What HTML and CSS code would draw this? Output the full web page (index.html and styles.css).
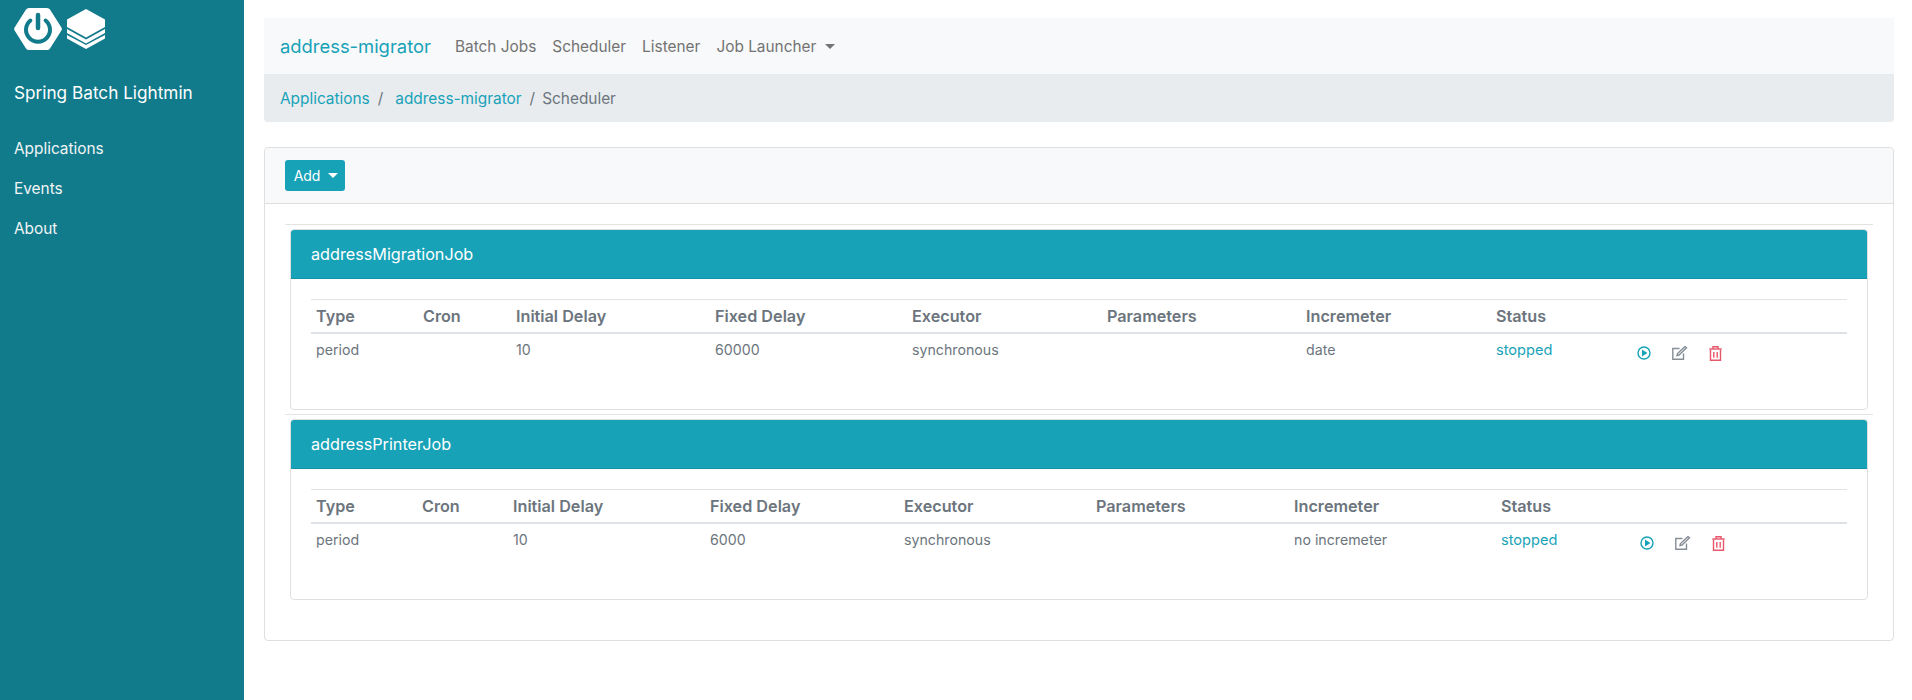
FILE: index.html
```html
<!DOCTYPE html>
<html lang="en">
<head>
  <meta charset="UTF-8">
  <title>Spring Batch Lightmin</title>
  <link rel="stylesheet" href="styles.css">
</head>
<body>
  <div class="layout">
    <aside class="sidebar">
      <div class="logos">
        <svg class="logo-spring" viewBox="0 0 48 42">
          <path d="M12 1.5 Q13 0 15 0 H33 Q35 0 36 1.5 L47.4 19.5 Q48.4 21 47.4 22.500 L36 40.500 Q35 42 33 42 H15 Q13 42 12 40.500 L.6 22.5 Q-.4 21 .6 19.5 Z" fill="#fff"/>
          <path d="M16.400 12.500 A12 12 0 1 0 31.600 12.500" fill="none" stroke="#117a8b" stroke-width="4" stroke-linecap="round"/>
          <path d="M24 7 V20" fill="none" stroke="#117a8b" stroke-width="4.500" stroke-linecap="round"/>
        </svg>
        <svg class="logo-stack" viewBox="0 0 38 40">
          <path d="M19 0 L38 10.500 V18 L19 28.500 L0 18 V10.500 Z" fill="#fff"/>
          <path d="M0 20 L19 30.500 L38 20 V24 L19 34.500 L0 24 Z" fill="#fff"/>
          <path d="M0 26 L19 36 L38 26 V29.500 L19 40 L0 29.500 Z" fill="#fff"/>
        </svg>
      </div>
      <div class="app-title">Spring Batch Lightmin</div>
      <nav class="side-nav">
        <a href="#">Applications</a>
        <a href="#">Events</a>
        <a href="#">About</a>
      </nav>
    </aside>

    <main class="content">
      <div class="navbar">
        <a class="brand" href="#">address-migrator</a>
        <a class="nav-link" href="#">Batch Jobs</a>
        <a class="nav-link" href="#">Scheduler</a>
        <a class="nav-link" href="#">Listener</a>
        <a class="nav-link" href="#">Job Launcher <span class="caret"></span></a>
      </div>
      <div class="breadcrumb">
        <a href="#">Applications</a>
        <span class="sep">/</span>
        <a href="#">address-migrator</a>
        <span class="sep">/</span>
        <span>Scheduler</span>
      </div>

      <section class="card outer">
        <div class="card-header">
          <button class="btn-add">Add <span class="caret"></span></button>
        </div>
        <div class="card-body">
          <hr>
          <div class="card job">
            <div class="job-header">addressMigrationJob</div>
            <div class="job-body">
              <table class="jobs first">
                <colgroup>
                  <col class="c1"><col class="c2"><col class="c3"><col class="c4"><col class="c5"><col class="c6"><col class="c7"><col class="c8"><col>
                </colgroup>
                <thead>
                  <tr><th>Type</th><th>Cron</th><th>Initial Delay</th><th>Fixed Delay</th><th>Executor</th><th>Parameters</th><th>Incremeter</th><th>Status</th><th></th></tr>
                </thead>
                <tbody>
                  <tr>
                    <td>period</td><td></td><td>10</td><td>60000</td><td>synchronous</td><td></td><td>date</td><td><a class="status" href="#">stopped</a></td>
                    <td>
                      <div class="actions">
                        <svg class="icon play" viewBox="0 0 14 14"><circle cx="7" cy="7" r="6"/><path class="solid" d="M5 3.600 L10.400 7 L5 10.400 Z"/></svg>
                        <svg class="icon edit" viewBox="0 0 16 14"><path d="M11.500 7.500 V13.200 H.8 V2.500 H7.500"/><path d="M5.500 7.500 L5 9.500 L7 9 L14.500 1.800 L13 .5 Z"/></svg>
                        <svg class="icon trash" viewBox="0 0 13 15"><path d="M1.500 3.500 V14.200 H11.500 V3.500"/><path d="M.3 3 H12.700"/><path d="M4 3 V.8 H9 V3"/><path d="M4.800 6 V11.800 M8.200 6 V11.800"/></svg>
                      </div>
                    </td>
                  </tr>
                </tbody>
              </table>
            </div>
          </div>
          <hr>
          <div class="card job">
            <div class="job-header">addressPrinterJob</div>
            <div class="job-body">
              <table class="jobs second">
                <colgroup>
                  <col class="c1"><col class="c2"><col class="c3"><col class="c4"><col class="c5"><col class="c6"><col class="c7"><col class="c8"><col>
                </colgroup>
                <thead>
                  <tr><th>Type</th><th>Cron</th><th>Initial Delay</th><th>Fixed Delay</th><th>Executor</th><th>Parameters</th><th>Incremeter</th><th>Status</th><th></th></tr>
                </thead>
                <tbody>
                  <tr>
                    <td>period</td><td></td><td>10</td><td>6000</td><td>synchronous</td><td></td><td>no incremeter</td><td><a class="status" href="#">stopped</a></td>
                    <td>
                      <div class="actions">
                        <svg class="icon play" viewBox="0 0 14 14"><circle cx="7" cy="7" r="6"/><path class="solid" d="M5 3.600 L10.400 7 L5 10.400 Z"/></svg>
                        <svg class="icon edit" viewBox="0 0 16 14"><path d="M11.500 7.500 V13.200 H.8 V2.500 H7.500"/><path d="M5.500 7.500 L5 9.500 L7 9 L14.500 1.800 L13 .5 Z"/></svg>
                        <svg class="icon trash" viewBox="0 0 13 15"><path d="M1.500 3.500 V14.200 H11.500 V3.500"/><path d="M.3 3 H12.700"/><path d="M4 3 V.8 H9 V3"/><path d="M4.800 6 V11.800 M8.200 6 V11.800"/></svg>
                      </div>
                    </td>
                  </tr>
                </tbody>
              </table>
            </div>
          </div>
        </div>
      </section>
    </main>
  </div>
</body>
</html>
```

FILE: styles.css
```css
* {
  box-sizing: border-box;
}
body {
  margin: 0;
  font-family: Inter, "Liberation Sans", sans-serif;
  font-size: 16px;
  line-height: 1.5;
  color: #6c757d;
  background: #fff;
}
a {
  color: #17a2b8;
  text-decoration: none;
}
.layout {
  display: flex;
  min-height: 700px;
}

/* sidebar */
.sidebar {
  width: 244px;
  flex: none;
  background: #117a8b;
  color: #fff;
  padding: 8px 14px 0;
}
.logos {
  display: flex;
  align-items: center;
  gap: 5px;
  height: 42px;
}
.logo-spring {
  width: 48px;
  height: 42px;
}
.logo-stack {
  width: 38px;
  height: 40px;
}
.app-title {
  margin-top: 29px;
  font-size: 17.2px;
  line-height: 27px;
}
.side-nav {
  display: flex;
  flex-direction: column;
  margin-top: 23px;
  font-size: 15.400px;
}
.side-nav a {
  color: #f1f5f6;
  height: 40px;
  line-height: 40px;
}

/* top bars */
.content {
  flex: 1;
  min-width: 0;
  padding: 18px 18px 0 20px;
}
.navbar {
  display: flex;
  align-items: center;
  height: 56px;
  padding: 1px 16px 0;
  background: #f8f9fa;
  font-size: 15.400px;
}
.brand {
  font-size: 18.400px;
  margin-right: 16px;
}
.nav-link {
  color: #737373;
  padding: 0 8px;
}
.caret {
  display: inline-block;
  margin-left: 4px;
  vertical-align: 3px;
  border-top: 5px solid;
  border-left: 5px solid transparent;
  border-right: 5px solid transparent;
}
.breadcrumb {
  display: flex;
  align-items: center;
  height: 48px;
  padding: 2px 16px 0;
  background: #e9ecef;
  border-radius: 0 0 4px 4px;
  font-size: 15.400px;
}
.sep {
  padding: 0 7px 0 8px;
}
.sep:first-of-type {
  padding-right: 12px;
}

/* cards */
.card {
  border: 1px solid #dfdfdf;
  border-radius: 4px;
  background: #fff;
}
.outer {
  margin-top: 25px;
  height: 494px;
}
.card-header {
  height: 56px;
  padding: 12px 20px;
  background: #f8f9fa;
  border-bottom: 1px solid #dfdfdf;
  border-radius: 4px 4px 0 0;
}
.btn-add {
  display: block;
  width: 60px;
  height: 31px;
  padding: 0 0 0 2px;
  border: 0;
  border-radius: 3px;
  background: #17a2b8;
  color: #fff;
  font: 14px Inter, "Liberation Sans", sans-serif;
}
.card-body {
  padding: 20px;
}
hr {
  margin: 0 0 4px;
  border: 0;
  border-top: 1px solid #e3e3e3;
}
.job {
  margin: 0 5px 4px;
}
.job-header {
  height: 49px;
  padding: 0 20px;
  font-size: 16.200px;
  line-height: 48px;
  background: #17a2b8;
  border-bottom: 1px solid #1492a6;
  border-radius: 3px 3px 0 0;
  color: #fff;
}
.job-body {
  height: 130px;
  padding: 20px;
}

/* tables */
.jobs {
  width: 100%;
  table-layout: fixed;
  border-collapse: collapse;
  border-top: 1px solid #e3e3e3;
}
.jobs th {
  height: 33px;
  padding: 0 5px;
  text-align: left;
  font-weight: 600;
  font-size: 16.200px;
  border-bottom: 2px solid #dee2e6;
}
.jobs td {
  padding: 5px;
  font-size: 14.200px;
  line-height: 21px;
  vertical-align: top;
}
.status {
  font-size: 14.600px;
}
.first .c1 { width: 107px; }
.first .c2 { width: 93px; }
.first .c3 { width: 199px; }
.first .c4 { width: 197px; }
.first .c5 { width: 195px; }
.first .c6 { width: 199px; }
.first .c7 { width: 190px; }
.first .c8 { width: 141px; }
.second .c1 { width: 106px; }
.second .c2 { width: 91px; }
.second .c3 { width: 197px; }
.second .c4 { width: 194px; }
.second .c5 { width: 192px; }
.second .c6 { width: 198px; }
.second .c7 { width: 207px; }
.second .c8 { width: 139px; }

.actions {
  display: flex;
  align-items: center;
  gap: 21px;
  padding-top: 7px;
}
.icon {
  display: block;
  fill: none;
  stroke-width: 1.400;
}
.play {
  width: 14px;
  height: 14px;
  stroke: #17a2b8;
}
.play .solid {
  fill: #17a2b8;
  stroke: none;
}
.edit {
  width: 16px;
  height: 14px;
  stroke: #868e96;
}
.trash {
  width: 13px;
  height: 15px;
  stroke: #e8566a;
}
```
